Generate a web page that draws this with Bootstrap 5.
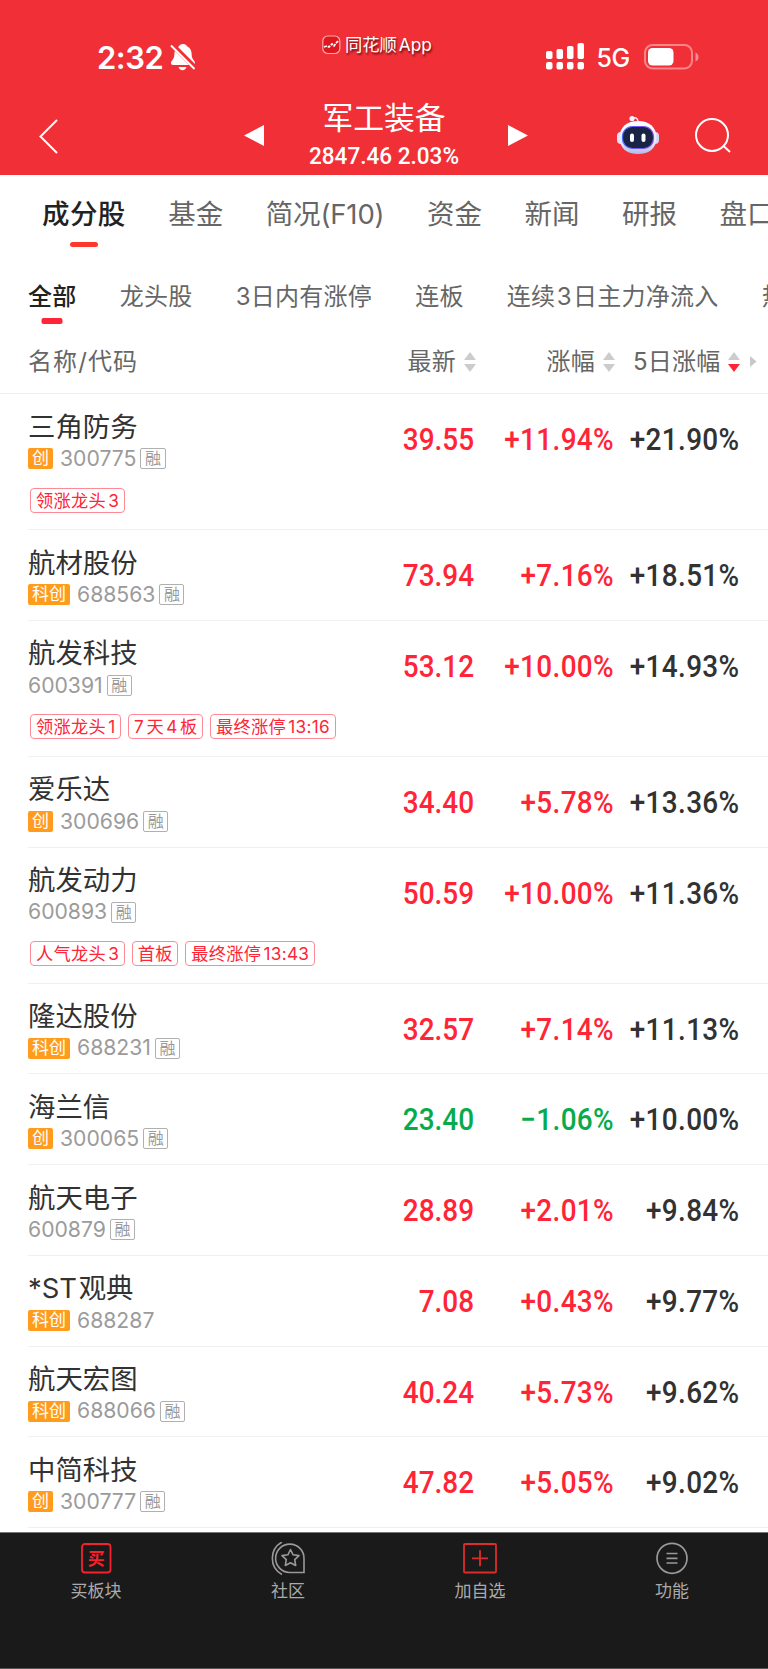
<!DOCTYPE html>
<html lang="zh-CN">
<head>
<meta charset="utf-8">
<meta name="viewport" content="width=device-width, initial-scale=1">
<title>军工装备</title>
<link href="https://cdn.jsdelivr.net/npm/bootstrap@5.3.0/dist/css/bootstrap.min.css" rel="stylesheet">
<style>
  :root { --up:#ff2436; --down:#07ab4b; --ink:#323232; }
  html, body { overflow:hidden; }
  body { font-family:Inter,"Noto Sans CJK SC",sans-serif; color:var(--ink); background:#fff; line-height:1; }
  svg { display:block; flex:none; }
  .screen { width:768px; height:1669px; overflow:hidden; }
  .nowrap > * , .nowrap { white-space:nowrap; flex-shrink:0; }

  .top-area { background:#f12f37; color:#fff; height:175px; }
  .status-row { height:86px; padding-left:97px; }
  .clock { width:72px; font-size:31px; font-weight:600; letter-spacing:-.5px; padding-top:29px; }
  .app-mark { margin-left:125px; width:200px; height:83px; margin-top:3px; font-size:17.3px; word-spacing:-3px; text-shadow:1px 1.5px 2px rgba(60,0,0,.75); }
  .net { font-size:25px; font-weight:500; width:46px; padding:31px 0 0 12px; letter-spacing:-.5px; }
  .title-row { height:89px; padding-left:38px; }
  .title-block { width:200px; margin-left:19px; padding-top:14px; }
  .title-main { font-size:30.8px; line-height:36px; }
  .title-sub { font:500 24.5px/28px Roboto,sans-serif; transform:scaleX(.92); margin-top:5.5px; }

  .tabs-row { height:78px; padding-left:42px; font-size:27.5px; color:#666; }
  .tabs-row > span { height:78px; line-height:79px; margin-right:42.5px; }
  .tabs-row > .tab-on { letter-spacing:.4px; }
  .tabs-row > .latin-tab { letter-spacing:-.15px; }
  .sub-row { height:79px; padding-left:28px; font-size:24px; color:#666; letter-spacing:.25px; word-spacing:-5.7px; }
  .sub-row > span { height:79px; line-height:88px; margin-right:43.2px; }
  .tab-on { position:relative; font-weight:500; color:#222; }
  .tab-on::after { content:""; position:absolute; left:50%; transform:translateX(-50%); border-radius:3px; }
  .tabs-row .tab-on::after { width:28px; height:5.5px; top:66.5px; background:#ff382e; }
  .sub-row .tab-on::after { width:21px; height:5.5px; top:65px; border-radius:2px; background:var(--up); }
  .head-row { height:62px; padding-left:28px; font-size:24px; color:#666; border-bottom:1px solid #eee; letter-spacing:.2px; }
  .head-row > div { height:59px; line-height:59px; }
  .head-name { width:379.5px; letter-spacing:1.1px; }

  .stock { height:90.75px; margin-left:28px; border-bottom:1px solid #f0f0f0; }
  .stock.tall { height:136px; }
  .info { width:317px; padding-top:18.5px; }
  .stock-name { font-size:27.4px; line-height:28px; word-spacing:-6px; }
  .code-row { height:21px; margin-top:7.5px; font-size:21.2px; color:#9b9b9b; }
  .board { background:#ff9c1d; color:#fff; font-size:17px; line-height:20px; height:21px; padding:0 4px; border-radius:2px; margin-right:7px; }
  .margin-flag { border:1px solid #b0b0b0; font-size:16px; height:21px; line-height:18px; padding:0 3.5px; border-radius:2px; margin-left:4px; }
  .tag-row { margin:18.5px 0 0 2px; gap:7px; }
  .tag { border:1px solid #ff8994; color:var(--up); border-radius:4px; height:25px; line-height:23px; font-size:17.2px; padding:0 4.5px 0 5px; word-spacing:-2.8px; letter-spacing:.3px; }
  .figure-cell { font:500 31px/36px Roboto,sans-serif; letter-spacing:.4px; text-align:right; padding-top:28px; transform:scaleX(.9); transform-origin:right; }
  .c1 { width:129px; letter-spacing:0; } .c2 { width:140px; } .c3 { width:125.5px; }
  .up { color:var(--up); } .down { color:var(--down); }

  .bottom-bar { height:137px; margin-top:3.5px; background:#1a1a1a; color:#aaa; border-top:1px solid #777; border-bottom:1px solid #555; font-size:17px; }
  .bottom-bar > div { padding-top:9px; gap:7.5px; }
  .buy-glyph { font-size:17px; font-weight:700; fill:#f5222d; }
</style>
</head>
<body>
<main class="screen">
  <header class="top-area">
    <div class="status-row d-flex nowrap">
      <div class="clock d-flex align-items-center">2:32</div>
      <svg style="margin-top:43px" width="28" height="29" viewBox="0 0 28 29">
        <path fill="#fff" d="M14 1c-2.500 0-3.500 1-4 2.300C6.500 5 5.300 8 5.300 12c0 4.500-3.300 5.500-3.300 8 0 1.300.7 2 2 2h20c1.300 0 2-.7 2-2 0-2.500-3.300-3.500-3.300-8 0-4-1.200-7-4.700-8.700C17.500 2 16.500 1 14 1zM9.500 24h8c-.5 2-2 3.200-4 3.200s-3.500-1.200-4-3.200z"/>
        <path d="M3 1.500 27 25.500" stroke="#f12f37" stroke-width="5"/>
        <path d="M2 2.500 25.500 26" stroke="#fff" stroke-width="2"/>
      </svg>
      <div class="app-mark d-flex align-items-center">
        <svg class="me-1" width="19" height="20" viewBox="0 0 19 20"><rect x=".8" y="1" width="17" height="17.500" rx="5" fill="#df171f" stroke="#ffaaad" stroke-width="1.200"/><path d="M2 12l3-1 2 1 3-3 2 2 3-4 2-1" fill="none" stroke="#fff" stroke-width="1.700" stroke-dasharray="3 1"/></svg>
        <span>同花顺 App</span>
      </div>
      <svg style="margin:43px 0 0 22.500px" width="40" height="27" viewBox="0 0 40 27" fill="#fff">
        <rect x="1" y="8" width="6.500" height="8" rx="1.800"/><rect x="11.500" y="6" width="6.500" height="10" rx="1.800"/><rect x="22" y="3" width="6.500" height="13" rx="1.800"/><rect x="32.500" y="0" width="6.500" height="16" rx="1.800"/>
        <rect x="1" y="19" width="6.500" height="7.500" rx="2"/><rect x="11.500" y="19" width="6.500" height="7.500" rx="2"/><rect x="22" y="19" width="6.500" height="7.500" rx="2"/><rect x="32.500" y="19" width="6.500" height="7.500" rx="2"/>
      </svg>
      <div class="net d-flex align-items-center">5G</div>
      <svg style="margin:43px 0 0 13px" width="56" height="28" viewBox="0 0 56 28"><rect x="1" y="2" width="47" height="23.500" rx="7.500" fill="none" stroke="#fff" stroke-opacity=".42" stroke-width="2"/><rect x="4" y="5" width="25.500" height="17.500" rx="4.500" fill="#fff"/><path d="M51.500 9.500v9q3-1.500 3-4.500t-3-4.500z" fill="#fff" fill-opacity=".45"/></svg>
    </div>
    <div class="title-row d-flex nowrap">
      <svg style="margin-top:32px" width="22" height="38" viewBox="0 0 22 38"><path d="M19 2 2.500 18.500 19 35" fill="none" stroke="#fff" stroke-width="2"/></svg>
      <svg style="margin:38px 0 0 183px" width="22" height="24" viewBox="0 0 22 24"><path d="M1 11.500 21 1v21z" fill="#fff"/></svg>
      <div class="title-block text-center">
        <div class="title-main">军工装备</div>
        <div class="title-sub">2847.46 2.03%</div>
      </div>
      <svg style="margin:38px 0 0 23px" width="22" height="24" viewBox="0 0 22 24"><path d="M1 1v21l20-10.500z" fill="#fff"/></svg>
      <svg style="margin:28px 0 0 86.500px" width="44" height="42" viewBox="0 0 44 42">
        <defs><linearGradient id="shell" x2="0" y2="1"><stop stop-color="#fff"/><stop offset=".65" stop-color="#e6e7fb"/><stop offset="1" stop-color="#b5b8e9"/></linearGradient><linearGradient id="rim"><stop stop-color="#4b6bff"/><stop offset="1" stop-color="#8d4de0"/></linearGradient></defs>
        <circle cx="16" cy="4.500" r="2.600" fill="#f3f1ff"/><path d="M17 4q5-1 5 4" fill="none" stroke="#f3f1ff" stroke-width="1.500"/>
        <rect x="1" y="18" width="9" height="12" rx="4" fill="#e0e1fa"/><rect x="34" y="18" width="9" height="12" rx="4" fill="#d4d6f5"/>
        <path d="M22 7c11 0 18.500 6 18.500 16.500C40.500 34.500 33 40 22 40S3.500 34.500 3.500 23.500C3.500 13 11 7 22 7z" fill="url(#shell)"/>
        <rect x="6.500" y="12.500" width="31" height="22" rx="10" fill="#192346" stroke="url(#rim)" stroke-width="1.200"/>
        <rect x="14" y="19.500" width="4" height="8.500" rx="2" fill="#fff"/><rect x="25.500" y="19.500" width="4" height="8.500" rx="2" fill="#fff"/>
      </svg>
      <svg style="margin:32px 0 0 35px" width="37" height="37" viewBox="0 0 37 37" fill="none" stroke="#fff" stroke-width="2"><circle cx="17" cy="17" r="16"/><path d="m28 27.500 7 6.500"/></svg>
    </div>
  </header>

  <nav class="tabs-row d-flex nowrap">
    <span class="tab-on">成分股</span><span>基金</span><span class="latin-tab">简况(F10)</span><span>资金</span><span>新闻</span><span>研报</span><span>盘口</span>
  </nav>
  <nav class="sub-row d-flex nowrap">
    <span class="tab-on">全部</span><span>龙头股</span><span>3日内有涨停</span><span>连板</span><span>连续 3 日主力净流入</span><span>热</span>
  </nav>
  <div class="head-row d-flex nowrap">
    <div class="head-name">名称/代码</div>
    <div class="d-flex align-items-center" style="width:139px">最新<svg class="ms-2" width="12" height="22" viewBox="0 0 12 22" fill="#ccc"><path d="M0 9 6 1l6 8zM0 13h12l-6 8z"/></svg></div>
    <div class="d-flex align-items-center" style="width:86.5px">涨幅<svg class="ms-2" width="12" height="22" viewBox="0 0 12 22" fill="#ccc"><path d="M0 9 6 1l6 8zM0 13h12l-6 8z"/></svg></div>
    <div class="d-flex align-items-center">5日涨幅<svg style="margin-left:8px" width="12" height="22" viewBox="0 0 12 22" fill="#ccc"><path d="M0 9 6 1l6 8z"/><path d="M0 13h12l-6 8z" fill="#ff2436"/></svg><svg style="margin-left:10px" width="7" height="12" viewBox="0 0 7 12"><path d="M0 0v11l6.500-5.500z" fill="#c8c8c8"/></svg></div>
  </div>

  <section>
    <article class="stock tall d-flex nowrap">
      <div class="info"><div class="stock-name">三角防务</div><div class="code-row d-flex align-items-center"><span class="board">创</span>300775<span class="margin-flag">融</span></div>
        <div class="tag-row d-flex"><span class="tag">领涨龙头 3</span></div></div>
      <div class="figure-cell c1 up">39.55</div><div class="figure-cell c2 up">+11.94%</div><div class="figure-cell c3">+21.90%</div>
    </article>
    <article class="stock d-flex nowrap">
      <div class="info"><div class="stock-name">航材股份</div><div class="code-row d-flex align-items-center"><span class="board">科创</span>688563<span class="margin-flag">融</span></div></div>
      <div class="figure-cell c1 up">73.94</div><div class="figure-cell c2 up">+7.16%</div><div class="figure-cell c3">+18.51%</div>
    </article>
    <article class="stock tall d-flex nowrap">
      <div class="info"><div class="stock-name">航发科技</div><div class="code-row d-flex align-items-center">600391<span class="margin-flag">融</span></div>
        <div class="tag-row d-flex"><span class="tag">领涨龙头 1</span><span class="tag">7 天 4 板</span><span class="tag">最终涨停 13:16</span></div></div>
      <div class="figure-cell c1 up">53.12</div><div class="figure-cell c2 up">+10.00%</div><div class="figure-cell c3">+14.93%</div>
    </article>
    <article class="stock d-flex nowrap">
      <div class="info"><div class="stock-name">爱乐达</div><div class="code-row d-flex align-items-center"><span class="board">创</span>300696<span class="margin-flag">融</span></div></div>
      <div class="figure-cell c1 up">34.40</div><div class="figure-cell c2 up">+5.78%</div><div class="figure-cell c3">+13.36%</div>
    </article>
    <article class="stock tall d-flex nowrap">
      <div class="info"><div class="stock-name">航发动力</div><div class="code-row d-flex align-items-center">600893<span class="margin-flag">融</span></div>
        <div class="tag-row d-flex"><span class="tag">人气龙头 3</span><span class="tag">首板</span><span class="tag">最终涨停 13:43</span></div></div>
      <div class="figure-cell c1 up">50.59</div><div class="figure-cell c2 up">+10.00%</div><div class="figure-cell c3">+11.36%</div>
    </article>
    <article class="stock d-flex nowrap">
      <div class="info"><div class="stock-name">隆达股份</div><div class="code-row d-flex align-items-center"><span class="board">科创</span>688231<span class="margin-flag">融</span></div></div>
      <div class="figure-cell c1 up">32.57</div><div class="figure-cell c2 up">+7.14%</div><div class="figure-cell c3">+11.13%</div>
    </article>
    <article class="stock d-flex nowrap">
      <div class="info"><div class="stock-name">海兰信</div><div class="code-row d-flex align-items-center"><span class="board">创</span>300065<span class="margin-flag">融</span></div></div>
      <div class="figure-cell c1 down">23.40</div><div class="figure-cell c2 down">−1.06%</div><div class="figure-cell c3">+10.00%</div>
    </article>
    <article class="stock d-flex nowrap">
      <div class="info"><div class="stock-name">航天电子</div><div class="code-row d-flex align-items-center">600879<span class="margin-flag">融</span></div></div>
      <div class="figure-cell c1 up">28.89</div><div class="figure-cell c2 up">+2.01%</div><div class="figure-cell c3">+9.84%</div>
    </article>
    <article class="stock d-flex nowrap">
      <div class="info"><div class="stock-name">*ST 观典</div><div class="code-row d-flex align-items-center"><span class="board">科创</span>688287</div></div>
      <div class="figure-cell c1 up">7.08</div><div class="figure-cell c2 up">+0.43%</div><div class="figure-cell c3">+9.77%</div>
    </article>
    <article class="stock d-flex nowrap">
      <div class="info"><div class="stock-name">航天宏图</div><div class="code-row d-flex align-items-center"><span class="board">科创</span>688066<span class="margin-flag">融</span></div></div>
      <div class="figure-cell c1 up">40.24</div><div class="figure-cell c2 up">+5.73%</div><div class="figure-cell c3">+9.62%</div>
    </article>
    <article class="stock d-flex nowrap">
      <div class="info"><div class="stock-name">中简科技</div><div class="code-row d-flex align-items-center"><span class="board">创</span>300777<span class="margin-flag">融</span></div></div>
      <div class="figure-cell c1 up">47.82</div><div class="figure-cell c2 up">+5.05%</div><div class="figure-cell c3">+9.02%</div>
    </article>
  </section>

  <footer class="bottom-bar d-flex">
    <div class="w-25 d-flex flex-column align-items-center">
      <svg width="36" height="34" viewBox="0 0 36 34"><rect x="4" y="2" width="28.500" height="28.500" rx="3" fill="none" stroke="#f5222d" stroke-width="1.800"/><text class="buy-glyph" x="18.200" y="22.500" text-anchor="middle">买</text></svg>
      <span>买板块</span>
    </div>
    <div class="w-25 d-flex flex-column align-items-center">
      <svg width="36" height="34" viewBox="0 0 36 34" fill="none" stroke="#999" stroke-width="1.600"><path d="M34 16.500V30.500H19.500A14.200 14.200 0 1 1 34 16.500z"/><path d="M12 0A18.500 18.500 0 0 0 12 32.500"/><path stroke-linejoin="round" d="m20.500 7.500 2.600 5.300 5.900.8-4.300 4.100 1 5.800-5.200-2.700-5.200 2.700 1-5.800-4.300-4.100 5.900-.8z"/></svg>
      <span>社区</span>
    </div>
    <div class="w-25 d-flex flex-column align-items-center">
      <svg width="36" height="34" viewBox="0 0 36 34" fill="none" stroke="#e02b2b" stroke-width="1.800"><rect x="2" y="2" width="32" height="28.500" rx="1"/><path d="M10 16.300h16M18 8.300v16"/></svg>
      <span>加自选</span>
    </div>
    <div class="w-25 d-flex flex-column align-items-center">
      <svg width="36" height="34" viewBox="0 0 36 34" fill="none" stroke="#999" stroke-width="1.700"><circle cx="18" cy="16.300" r="15"/><path d="M12.500 11.500h11M12.500 16.300h11M12.500 21h11"/></svg>
      <span>功能</span>
    </div>
  </footer>
</main>
<script src="https://cdn.jsdelivr.net/npm/bootstrap@5.3.0/dist/js/bootstrap.bundle.min.js"></script>
</body>
</html>
